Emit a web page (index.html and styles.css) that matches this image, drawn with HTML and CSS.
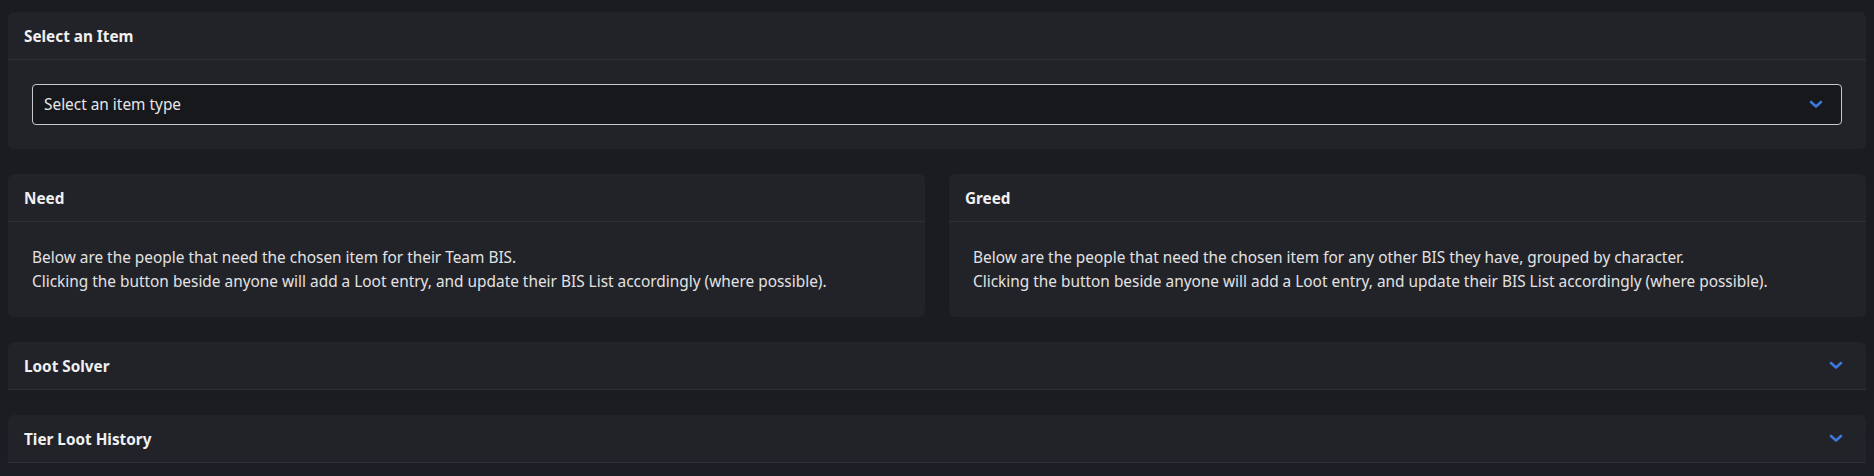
FILE: index.html
```html
<!DOCTYPE html>
<html>
<head>
<meta charset="utf-8">
<link rel="stylesheet" href="styles.css">
</head>
<body>
<div class="page">
  <section class="card">
    <header class="card-header"><span class="title">Select an Item</span></header>
    <div class="card-body">
      <div class="select">
        <span>Select an item type</span>
        <svg class="chev" width="14" height="9" viewBox="0 0 14 9"><path d="M2 2 L7 6.5 L12 2" fill="none" stroke="#3a78dc" stroke-width="2.6" stroke-linecap="round" stroke-linejoin="round"/></svg>
      </div>
    </div>
  </section>
  <div class="cols">
    <section class="card">
      <header class="card-header"><span class="title">Need</span></header>
      <div class="card-body text">
        <p>Below are the people that need the chosen item for their Team BIS.</p>
        <p>Clicking the button beside anyone will add a Loot entry, and update their BIS List accordingly (where possible).</p>
      </div>
    </section>
    <section class="card">
      <header class="card-header"><span class="title">Greed</span></header>
      <div class="card-body text">
        <p>Below are the people that need the chosen item for any other BIS they have, grouped by character.</p>
        <p>Clicking the button beside anyone will add a Loot entry, and update their BIS List accordingly (where possible).</p>
      </div>
    </section>
  </div>
  <section class="card collapsed">
    <header class="card-header"><span class="title">Loot Solver</span>
      <svg class="chev" width="14" height="9" viewBox="0 0 14 9"><path d="M2 2 L7 6.5 L12 2" fill="none" stroke="#3a78dc" stroke-width="2.6" stroke-linecap="round" stroke-linejoin="round"/></svg>
    </header>
  </section>
  <section class="card collapsed">
    <header class="card-header"><span class="title">Tier Loot History</span>
      <svg class="chev" width="14" height="9" viewBox="0 0 14 9"><path d="M2 2 L7 6.5 L12 2" fill="none" stroke="#3a78dc" stroke-width="2.6" stroke-linecap="round" stroke-linejoin="round"/></svg>
    </header>
  </section>
</div>
</body>
</html>
```

FILE: styles.css
```css
* { box-sizing: border-box; }
html, body { margin: 0; padding: 0; }
body {
  background: linear-gradient(to bottom, #1b1c20 0%, #1b1c20 80%, #1c1e26 100%);
  min-height: 476px;
  font-family: "Noto Sans", "Open Sans", sans-serif;
  color: #e6e6e8;
}
.page {
  padding: 12px 8px 0 8px;
  display: flex;
  flex-direction: column;
  gap: 25px;
}
.card {
  background: #222328;
  border-radius: 6px;
}
.card.collapsed { border-radius: 6px 6px 0 0; }
.card-header {
  height: 48px;
  padding: 0 16px 0 16px;
  display: flex;
  align-items: center;
  justify-content: space-between;
  border-bottom: 1px solid #2f3036;
}
.title {
  font-weight: 700;
  font-size: 15.3px;
  color: #f0f0f2;
}
.card-body { padding: 24px; }
.card-body.text { padding: 24px 24px 23px 24px; }
.text p {
  margin: 0;
  font-size: 15.4px;
  line-height: 24px;
  color: #e2e2e4;
}
.select {
  height: 41px;
  background: #17181c;
  border: 1px solid #c8c8cc;
  border-radius: 4px;
  display: flex;
  align-items: center;
  justify-content: space-between;
  padding: 0 18px 0 11px;
  font-size: 15.4px;
  color: #e6e6e8;
}
.cols {
  display: grid;
  grid-template-columns: 1fr 1fr;
  gap: 24px;
}
.collapsed .card-header { padding-right: 23px; }
```
